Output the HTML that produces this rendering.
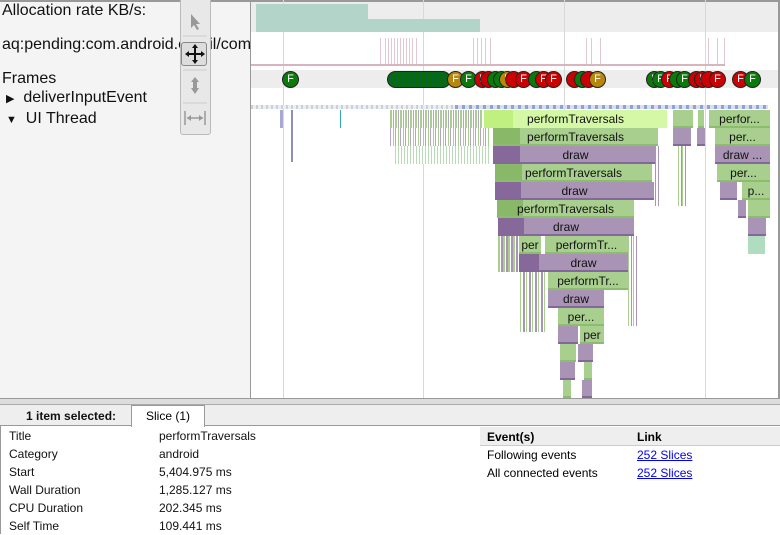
<!DOCTYPE html>
<html><head><meta charset="utf-8"><style>
*{margin:0;padding:0;box-sizing:border-box}
body{width:780px;height:534px;overflow:hidden;background:#fff;font-family:"Liberation Sans",sans-serif;position:relative}
.a{position:absolute}
.lbl{position:absolute;left:2px;font-size:16px;color:#111;white-space:nowrap}
.s{position:absolute;height:18px;font-size:12px;color:#111;text-align:center;line-height:18px;overflow:hidden;white-space:nowrap}
.g{background:#a9cf8f;border-bottom:2px solid #8cbd6c}
.p{background:#a994b5;border-bottom:2px solid #85689b}
.gd{background:#88b868}
.pd{background:#86699a}
.c{position:absolute;top:71px;width:17px;height:17px;border-radius:50%;border:1px solid #222;color:#fff;font-size:11px;line-height:15px;text-align:center}
.G{background:#0a7a0a}.R{background:#c00}.O{background:#b8860b}
.vl{position:absolute;top:0;width:1px;height:398px;background:#d8d8d8}
.pk{position:absolute;top:38px;width:1px;height:26px;background:#e4c8d0}
.t td{font-size:12px;padding:0 0 0 9px;height:18px;color:#111}
</style></head><body>
<!-- left panel -->
<div class="a" style="left:0;top:0;width:251px;height:398px;background:#f4f4f4;border-right:1px solid #999"></div>
<div class="a" style="left:251px;top:0;width:529px;height:32px;background:#ededed"></div>
<div class="a" style="left:251px;top:70px;width:529px;height:18px;background:#ededed"></div>
<div class="a" style="left:0;top:0;width:780px;height:2px;background:#999"></div>
<div class="a" style="left:778px;top:0;width:2px;height:398px;background:#999"></div>
<div class="vl" style="left:283px"></div><div class="vl" style="left:423px"></div><div class="vl" style="left:564px"></div><div class="vl" style="left:705px"></div>
<div class="lbl" style="top:2px">Allocation rate KB/s:</div>
<div class="lbl" style="top:36px">aq:pending:com.android.email/com</div>
<div class="lbl" style="top:70px">Frames</div>
<div class="lbl" style="top:89px;left:6px"><span style="font-size:11px">▶</span>&nbsp; deliverInputEvent</div>
<div class="lbl" style="top:110px;left:6px"><span style="font-size:11px">▼</span>&nbsp; UI Thread</div>
<!-- toolbar -->
<div class="a" style="left:180px;top:-4px;width:31px;height:139px;background:#e8e8e8;border:1px solid #bbb;border-radius:3px"></div>
<div class="a" style="left:181px;top:42px;width:26px;height:24px;border:1px solid #888;border-radius:3px;background:#ddd"></div>
<svg class="a" style="left:180px;top:0" width="31" height="135">
<path d="M11 14 L11 28 L14 25 L17 30 L19 29 L16 24 L20 24 Z" fill="#999"/>
<path d="M15 46 L15 62 M7 54 L23 54" stroke="#111" stroke-width="2"/>
<path d="M15 44 L12 48 L18 48Z M15 64 L12 60 L18 60Z M5 54 L9 51 L9 57Z M25 54 L21 51 L21 57Z" fill="#111"/>
<path d="M15 77 L11 82 L13 82 L13 88 L11 88 L15 94 L19 88 L17 88 L17 82 L19 82Z" fill="#999"/>
<path d="M5 111 L5 125 M25 111 L25 125 M7 118 L23 118" stroke="#999" stroke-width="1.5"/>
<path d="M7 118 L11 115 L11 121Z M23 118 L19 115 L19 121Z" fill="#999"/>
<path d="M3 36 L27 36 M3 70 L27 70 M3 103 L27 103" stroke="#ccc"/>
</svg>
<!-- allocation -->
<div class="a" style="left:256px;top:4px;width:112px;height:28px;background:#b2d4c9"></div>
<div class="a" style="left:256px;top:19px;width:224px;height:13px;background:#b2d4c9"></div>
<!-- pink track -->
<div class="a" style="left:251px;top:64px;width:474px;height:2px;background:#d8b4bf"></div>
<div class="pk" style="left:380px"></div><div class="pk" style="left:385px"></div><div class="pk" style="left:388px"></div><div class="pk" style="left:391px"></div><div class="pk" style="left:394px"></div><div class="pk" style="left:397px"></div><div class="pk" style="left:400px"></div><div class="pk" style="left:403px"></div><div class="pk" style="left:406px"></div><div class="pk" style="left:409px"></div><div class="pk" style="left:412px"></div><div class="pk" style="left:416px"></div>
<div class="pk" style="left:473px"></div><div class="pk" style="left:477px"></div><div class="pk" style="left:481px"></div><div class="pk" style="left:485px"></div><div class="pk" style="left:490px"></div>
<div class="pk" style="left:586px"></div><div class="pk" style="left:591px"></div><div class="pk" style="left:600px"></div>
<div class="pk" style="left:708px"></div><div class="pk" style="left:717px"></div><div class="pk" style="left:724px"></div>
<!-- frames -->
<div class="c G" style="left:282px">F</div>
<div class="a" style="left:387px;top:71px;width:64px;height:17px;border-radius:9px;background:repeating-linear-gradient(90deg,#0a6a0a 0 2px,#063 2px 3px);border:1px solid #222"></div>
<div class="c O" style="left:447px">F</div>
<div class="c G" style="left:460px">F</div>
<div class="c R" style="left:474px">F</div><div class="c R" style="left:480px"></div><div class="c G" style="left:487px"></div><div class="c G" style="left:493px"></div><div class="c O" style="left:499px">F</div><div class="c R" style="left:505px"></div>
<div class="c R" style="left:515px">F</div><div class="c G" style="left:528px"></div><div class="c R" style="left:535px">F</div><div class="c R" style="left:545px">F</div>
<div class="c R" style="left:566px"></div><div class="c G" style="left:574px"></div><div class="c R" style="left:580px"></div><div class="c O" style="left:589px">F</div>
<div class="c G" style="left:646px">F</div><div class="c G" style="left:652px">F</div><div class="c R" style="left:661px">F</div><div class="c G" style="left:669px"></div><div class="c G" style="left:676px">F</div><div class="c R" style="left:688px"></div><div class="c R" style="left:694px">F</div><div class="c R" style="left:700px"></div><div class="c R" style="left:709px">F</div>
<div class="c R" style="left:732px">F</div><div class="c G" style="left:744px">F</div>
<!-- thin stripe row -->
<div class="a" style="left:251px;top:105px;width:517px;height:4px;background:repeating-linear-gradient(90deg,#c8cfe0 0 2px,#eee 2px 5px)"></div>
<div class="a" style="left:455px;top:105px;width:313px;height:4px;background:repeating-linear-gradient(90deg,#8aa4d8 0 3px,#dde 3px 7px)"></div>
<!-- left slivers -->
<div class="a" style="left:390px;top:110px;width:92px;height:18px;background:repeating-linear-gradient(90deg,#a9cf8f 0 2px,#fff 2px 3px,#b6a4c4 3px 4px,#fff 4px 5px)"></div>
<div class="a" style="left:390px;top:128px;width:100px;height:18px;background:repeating-linear-gradient(90deg,#b6a4c4 0 1px,#fff 1px 3px,#a9cf8f 3px 4px,#fff 4px 5px)"></div>
<div class="a" style="left:395px;top:146px;width:95px;height:18px;background:repeating-linear-gradient(90deg,#b8dcb8 0 1px,#fff 1px 3px)"></div>
<div class="a" style="left:280px;top:110px;width:3px;height:18px;background:#a8a8d0"></div>
<div class="a" style="left:291px;top:110px;width:2px;height:52px;background:#9090b8"></div>
<div class="a" style="left:340px;top:110px;width:1px;height:18px;background:#3aa"></div>
<!-- flame -->
<div class="s" style="left:484px;top:110px;width:183px;background:#d4f8a6"><div class="a" style="left:0;top:0;width:29px;height:18px;background:#c0f080"></div><span style="position:relative">performTraversals</span></div>
<div class="s g" style="left:493px;top:128px;width:165px"><div class="a gd" style="left:0;top:0;width:27px;height:16px"></div><span style="position:relative">performTraversals</span></div>
<div class="s p" style="left:493px;top:146px;width:165px"><div class="a pd" style="left:0;top:0;width:27px;height:16px"></div><span style="position:relative">draw</span></div>
<div class="s g" style="left:495px;top:164px;width:157px"><div class="a gd" style="left:0;top:0;width:27px;height:16px"></div><span style="position:relative">performTraversals</span></div>
<div class="s p" style="left:495px;top:182px;width:159px"><div class="a pd" style="left:0;top:0;width:26px;height:16px"></div><span style="position:relative">draw</span></div>
<div class="s g" style="left:497px;top:200px;width:137px"><div class="a gd" style="left:0;top:0;width:26px;height:16px"></div><span style="position:relative">performTraversals</span></div>
<div class="s p" style="left:498px;top:218px;width:136px"><div class="a pd" style="left:0;top:0;width:26px;height:16px"></div><span style="position:relative">draw</span></div>
<div class="s g" style="left:519px;top:236px;width:22px">per</div>
<div class="s g" style="left:545px;top:236px;width:83px">performTr...</div>
<div class="s p" style="left:519px;top:254px;width:109px"><div class="a pd" style="left:0;top:0;width:20px;height:16px"></div><span style="position:relative;left:10px">draw</span></div>
<div class="s g" style="left:548px;top:272px;width:80px">performTr...</div>
<div class="s p" style="left:548px;top:290px;width:56px">draw</div>
<div class="s g" style="left:558px;top:308px;width:46px">per...</div>
<div class="s p" style="left:558px;top:326px;width:20px"></div>
<div class="s g" style="left:580px;top:326px;width:24px">per</div>
<div class="s g" style="left:560px;top:344px;width:16px"></div><div class="s p" style="left:578px;top:344px;width:15px"></div>
<div class="s p" style="left:560px;top:362px;width:15px"></div><div class="s g" style="left:584px;top:362px;width:8px"></div>
<div class="s g" style="left:563px;top:380px;width:8px"></div><div class="s p" style="left:582px;top:380px;width:10px"></div>
<!-- side slivers of flame -->
<div class="a" style="left:498px;top:236px;width:20px;height:36px;background:repeating-linear-gradient(90deg,#a9cf8f 0 2px,#fff 2px 3px,#a994b5 3px 5px)"></div>
<div class="a" style="left:628px;top:236px;width:10px;height:90px;background:repeating-linear-gradient(90deg,#a9cf8f 0 1px,#fff 1px 3px,#a994b5 3px 4px,#fff 4px 5px)"></div>
<div class="a" style="left:655px;top:146px;width:6px;height:60px;background:repeating-linear-gradient(90deg,#a994b5 0 1px,#fff 1px 3px)"></div>
<div class="a" style="left:520px;top:272px;width:26px;height:60px;background:repeating-linear-gradient(90deg,#a9cf8f 0 1px,#fff 1px 3px,#a994b5 3px 5px,#fff 5px 6px)"></div>
<!-- right cluster -->
<div class="s g" style="left:673px;top:110px;width:20px"></div>
<div class="s g" style="left:698px;top:110px;width:6px"></div>
<div class="s g" style="left:709px;top:110px;width:61px">perfor...</div>
<div class="s p" style="left:673px;top:128px;width:18px"></div>
<div class="s p" style="left:697px;top:128px;width:8px"></div>
<div class="s g" style="left:715px;top:128px;width:55px">per...</div>
<div class="s p" style="left:715px;top:146px;width:55px">draw ...</div>
<div class="s g" style="left:717px;top:164px;width:53px">per...</div>
<div class="s p" style="left:720px;top:182px;width:17px"></div>
<div class="s g" style="left:742px;top:182px;width:28px">p...</div>
<div class="s p" style="left:738px;top:200px;width:8px"></div><div class="s g" style="left:748px;top:200px;width:22px"></div>
<div class="s p" style="left:748px;top:218px;width:18px"></div>
<div class="a" style="left:748px;top:236px;width:17px;height:18px;background:#b0dcc0"></div>
<div class="a" style="left:678px;top:146px;width:8px;height:60px;background:repeating-linear-gradient(90deg,#a9cf8f 0 1px,#fff 1px 3px,#a994b5 3px 4px)"></div>
<!-- bottom panel -->
<div class="a" style="left:0;top:398px;width:780px;height:7px;background:#ddd;border-top:1px solid #999;border-bottom:1px solid #aaa"></div>
<div class="a" style="left:0;top:405px;width:780px;height:21px;background:#eee;border-bottom:1px solid #999"></div>
<div class="a" style="left:26px;top:409px;font-size:12px;font-weight:bold;color:#111">1 item selected:</div>
<div class="a" style="left:131px;top:405px;width:74px;height:22px;background:#fff;border:1px solid #999;border-bottom:none;font-size:12px;text-align:center;line-height:21px">Slice (1)</div>
<div class="a" style="left:0;top:426px;width:1px;height:108px;background:#999"></div>
<table class="t a" style="left:0;top:427px;border-collapse:collapse">
<tr><td style="width:150px">Title</td><td>performTraversals</td></tr>
<tr><td>Category</td><td>android</td></tr>
<tr><td>Start</td><td>5,404.975 ms</td></tr>
<tr><td>Wall Duration</td><td>1,285.127 ms</td></tr>
<tr><td>CPU Duration</td><td>202.345 ms</td></tr>
<tr><td>Self Time</td><td>109.441 ms</td></tr>
</table>
<div class="a" style="left:480px;top:427px;width:300px;height:19px;background:#eee;border-bottom:1px solid #ccc"></div>
<div class="a" style="left:487px;top:430px;font-size:12px;font-weight:bold">Event(s)</div>
<div class="a" style="left:637px;top:430px;font-size:12px;font-weight:bold">Link</div>
<div class="a" style="left:487px;top:448px;font-size:12px">Following events</div>
<div class="a" style="left:637px;top:448px;font-size:12px;color:#00e;text-decoration:underline">252 Slices</div>
<div class="a" style="left:487px;top:466px;font-size:12px">All connected events</div>
<div class="a" style="left:637px;top:466px;font-size:12px;color:#00e;text-decoration:underline">252 Slices</div>
</body></html>
